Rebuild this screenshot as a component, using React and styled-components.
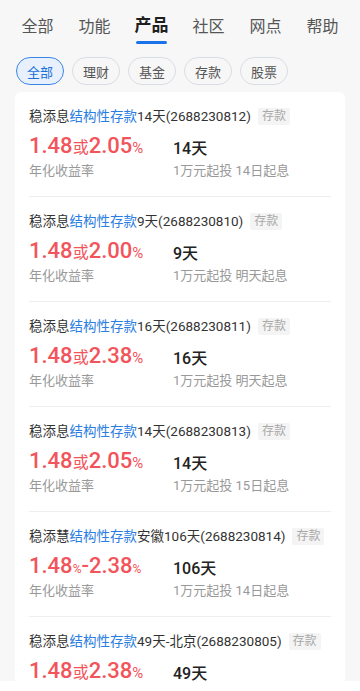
import React from "react";
import styled, { createGlobalStyle } from "styled-components";

const GlobalStyle = createGlobalStyle`
  html, body {
    margin: 0;
    padding: 0;
    background: #ffffff;
  }
  body {
    font-family: Roboto, "Noto Sans CJK SC", sans-serif;
  }
  * {
    box-sizing: border-box;
  }
`;

const Page = styled.div`
  width: 360px;
  height: 681px;
  overflow: hidden;
  background-color: #f7f7f7;
`;

const Tabs = styled.div`
  display: flex;
  padding: 0 9px;
  height: 48px;
`;

const Tab = styled.div`
  flex: 1;
  display: flex;
  flex-direction: column;
  align-items: center;
  padding-top: ${({ $active }) => ($active ? "14px" : "15px")};
  font-size: ${({ $active }) => ($active ? "17px" : "16px")};
  line-height: 23px;
  font-weight: ${({ $active }) => ($active ? 700 : 400)};
  color: ${({ $active }) => ($active ? "#1f1f1f" : "#555555")};
`;

const Underline = styled.div`
  width: 31px;
  height: 3px;
  margin-top: 4px;
  border-radius: 2px;
  background-color: #1a73e8;
`;

const Chips = styled.div`
  display: flex;
  align-items: flex-start;
  gap: 8px;
  padding: 9px 16px 0;
  height: 44px;
`;

const Chip = styled.div`
  height: 28px;
  padding: 0 10px;
  display: flex;
  align-items: center;
  border-radius: 14px;
  font-size: 13px;
  border: 1px solid ${({ $active }) => ($active ? "#3a86e8" : "#d9dde4")};
  background-color: ${({ $active }) => ($active ? "#e7f0fc" : "transparent")};
  color: ${({ $active }) => ($active ? "#1a6fd8" : "#555555")};
`;

const Card = styled.div`
  margin: 0 15px;
  padding: 0 14px;
  background-color: #ffffff;
  border-radius: 6px;
`;

const Item = styled.div`
  display: flex;
  flex-direction: column;
  padding: 14px 0 16px;
  border-bottom: 1px solid #eeeeee;
`;

const Title = styled.div`
  display: flex;
  align-items: center;
  font-size: 13.5px;
  line-height: 20px;
  color: #333333;
  white-space: nowrap;
`;

const Blue = styled.span`
  color: #2a7de1;
`;

const Tag = styled.span`
  margin-left: 7px;
  padding: 0 4px;
  height: 17px;
  line-height: 17px;
  font-size: 12px;
  color: #a8a8a8;
  background-color: #f4f4f4;
  border-radius: 2px;
`;

const Row = styled.div`
  display: grid;
  grid-template-columns: 144px 1fr;
  align-items: center;
`;

const Rate = styled.div`
  margin-top: 5px;
  height: 30px;
  display: flex;
  align-items: baseline;
  font-size: 22px;
  line-height: 30px;
  font-weight: 500;
  color: #f2545b;
`;

const Or = styled.span`
  font-size: 16px;
  font-weight: 400;
`;

const Pct = styled.span`
  font-size: ${({ $small }) => ($small ? "12px" : "15px")};
  font-weight: 400;
`;

const Term = styled.div`
  margin-top: 6px;
  font-size: 16px;
  font-weight: 500;
  color: #222222;
`;

const Sub = styled.div`
  margin-top: 1px;
  font-size: 13px;
  line-height: 18px;
  color: #999999;
`;

const tabs = ["全部", "功能", "产品", "社区", "网点", "帮助"];
const chips = ["全部", "理财", "基金", "存款", "股票"];

const products = [
  { pre: "稳添息", post: "14天(2688230812)", lo: "1.48", hi: "2.05", term: "14天", start: "14日起息" },
  { pre: "稳添息", post: "9天(2688230810)", lo: "1.48", hi: "2.00", term: "9天", start: "明天起息" },
  { pre: "稳添息", post: "16天(2688230811)", lo: "1.48", hi: "2.38", term: "16天", start: "明天起息" },
  { pre: "稳添息", post: "14天(2688230813)", lo: "1.48", hi: "2.05", term: "14天", start: "15日起息" },
  { pre: "稳添慧", post: "安徽106天(2688230814)", lo: "1.48", hi: "2.38", term: "106天", start: "14日起息", range: true },
  { pre: "稳添息", post: "49天-北京(2688230805)", lo: "1.48", hi: "2.38", term: "49天", start: "14日起息" },
];

const App = () => {
  return (
    <Page>
      <GlobalStyle />
      <Tabs>
        {tabs.map((t) => (
          <Tab key={t} $active={t === "产品"}>
            {t}
            {t === "产品" && <Underline />}
          </Tab>
        ))}
      </Tabs>
      <Chips>
        {chips.map((c, i) => (
          <Chip key={c} $active={i === 0}>
            {c}
          </Chip>
        ))}
      </Chips>
      <Card>
        {products.map((p, i) => (
          <Item key={i}>
            <Title>
              {p.pre}
              <Blue>结构性存款</Blue>
              {p.post}
              <Tag>存款</Tag>
            </Title>
            <Row>
              {p.range ? (
                <Rate>
                  {p.lo}
                  <Pct $small>%</Pct>-{p.hi}
                  <Pct $small>%</Pct>
                </Rate>
              ) : (
                <Rate>
                  {p.lo}
                  <Or>或</Or>
                  {p.hi}
                  <Pct>%</Pct>
                </Rate>
              )}
              <Term>{p.term}</Term>
            </Row>
            <Row>
              <Sub>年化收益率</Sub>
              <Sub>1万元起投 {p.start}</Sub>
            </Row>
          </Item>
        ))}
      </Card>
    </Page>
  );
};

export default App;
